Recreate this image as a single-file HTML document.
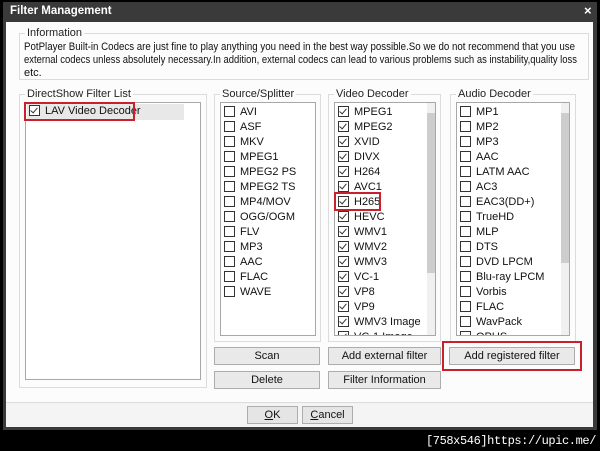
<!DOCTYPE html>
<html><head><meta charset="utf-8"><style>
*{margin:0;padding:0;box-sizing:border-box}
body{width:600px;height:451px;background:#000;position:relative;overflow:hidden;font-family:"Liberation Sans",sans-serif;font-size:11px;color:#111}
.a{position:absolute}
.grp{position:absolute;border:1px solid #dcdcdc}
.lbl{position:absolute;top:-7px;left:5px;background:#fcfcfc;padding:0 2px;font-size:11px;line-height:13px;color:#222}
.box{position:absolute;background:#fff;border:1px solid #a8a8a8}
.it{position:absolute;left:3px;height:15px;line-height:15px;white-space:nowrap}
.cb{display:inline-block;width:11px;height:11px;border:1px solid #333;vertical-align:-2px;margin-right:5px;background:#fff;position:relative}
.cb.c::after{content:"";position:absolute;left:2px;top:0px;width:3px;height:6px;border:solid #333;border-width:0 1px 1px 0;transform:rotate(40deg)}
.sb{position:absolute;top:0;right:0;width:8px;bottom:0;background:#f0f0f0}
.btn{position:absolute;height:18px;border:1px solid #adadad;background:#e9e9e9;text-align:center;line-height:16px;font-size:11px}
.red{position:absolute;border:2px solid #c8202c}
</style></head><body>
<div class="a" style="left:3px;top:2px;width:594px;height:20px;background:#3a3a3a"></div>
<div class="a" style="left:10px;top:5px;color:#fff;font-weight:bold;font-size:11.5px">Filter Management</div>
<div class="a" style="left:584px;top:3px;color:#fff;font-weight:bold;font-size:13px">×</div>
<div class="a" style="left:3px;top:22px;width:3px;height:407px;background:#3a3a3a"></div>
<div class="a" style="left:593px;top:22px;width:4px;height:407px;background:#3a3a3a"></div>
<div class="a" style="left:3px;top:427px;width:594px;height:3px;background:#3a3a3a"></div>
<div class="a" style="left:6px;top:22px;width:587px;height:380px;background:#fcfcfc"></div>
<div class="a" style="left:6px;top:402px;width:587px;height:25px;background:#f4f4f4;border-top:1px solid #dcdcdc"></div>

<div class="grp" style="left:19px;top:33px;width:570px;height:47px">
<div class="lbl">Information</div>
</div>
<svg class="a" style="left:0;top:0" width="600" height="90" font-family="Liberation Sans, sans-serif" font-size="11" fill="#111">
<text x="24" y="50" textLength="551" lengthAdjust="spacingAndGlyphs">PotPlayer Built-in Codecs are just fine to play anything you need in the best way possible.So we do not recommend that you use</text>
<text x="24" y="63" textLength="553" lengthAdjust="spacingAndGlyphs">external codecs unless absolutely necessary.In addition, external codecs can lead to various problems such as instability,quality loss</text>
<text x="24" y="76">etc.</text>
</svg>

<div class="grp" style="left:19px;top:94px;width:188px;height:294px"><div class="lbl">DirectShow Filter List</div></div>
<div class="box" style="left:25px;top:102px;width:176px;height:278px">
<div class="a" style="left:1px;top:1px;width:157px;height:16px;background:#e8e8e8"></div>
<div class="it" style="top:1px"><span class="cb c"></span>LAV Video Decoder</div>
</div>
<div class="red" style="left:24px;top:102px;width:111px;height:19px"></div>

<div class="grp" style="left:214px;top:94px;width:107px;height:248px"><div class="lbl">Source/Splitter</div></div>
<div class="box" style="left:220px;top:102px;width:96px;height:234px">
<div class="it" style="top:2px"><span class="cb"></span>AVI</div>
<div class="it" style="top:17px"><span class="cb"></span>ASF</div>
<div class="it" style="top:32px"><span class="cb"></span>MKV</div>
<div class="it" style="top:47px"><span class="cb"></span>MPEG1</div>
<div class="it" style="top:62px"><span class="cb"></span>MPEG2 PS</div>
<div class="it" style="top:77px"><span class="cb"></span>MPEG2 TS</div>
<div class="it" style="top:92px"><span class="cb"></span>MP4/MOV</div>
<div class="it" style="top:107px"><span class="cb"></span>OGG/OGM</div>
<div class="it" style="top:122px"><span class="cb"></span>FLV</div>
<div class="it" style="top:137px"><span class="cb"></span>MP3</div>
<div class="it" style="top:152px"><span class="cb"></span>AAC</div>
<div class="it" style="top:167px"><span class="cb"></span>FLAC</div>
<div class="it" style="top:182px"><span class="cb"></span>WAVE</div>
</div>

<div class="grp" style="left:328px;top:94px;width:113px;height:248px"><div class="lbl">Video Decoder</div></div>
<div class="box" style="left:334px;top:102px;width:102px;height:234px;overflow:hidden">
<div class="sb"><div class="a" style="left:0;top:10px;width:8px;height:160px;background:#cdcdcd"></div></div>
<div class="it" style="top:2px"><span class="cb c"></span>MPEG1</div>
<div class="it" style="top:17px"><span class="cb c"></span>MPEG2</div>
<div class="it" style="top:32px"><span class="cb c"></span>XVID</div>
<div class="it" style="top:47px"><span class="cb c"></span>DIVX</div>
<div class="it" style="top:62px"><span class="cb c"></span>H264</div>
<div class="it" style="top:77px"><span class="cb c"></span>AVC1</div>
<div class="it" style="top:92px"><span class="cb c"></span>H265</div>
<div class="it" style="top:107px"><span class="cb c"></span>HEVC</div>
<div class="it" style="top:122px"><span class="cb c"></span>WMV1</div>
<div class="it" style="top:137px"><span class="cb c"></span>WMV2</div>
<div class="it" style="top:152px"><span class="cb c"></span>WMV3</div>
<div class="it" style="top:167px"><span class="cb c"></span>VC-1</div>
<div class="it" style="top:182px"><span class="cb c"></span>VP8</div>
<div class="it" style="top:197px"><span class="cb c"></span>VP9</div>
<div class="it" style="top:212px"><span class="cb c"></span>WMV3 Image</div>
<div class="it" style="top:227px"><span class="cb c"></span>VC-1 Image</div>
</div>
<div class="red" style="left:334px;top:192px;width:47px;height:19px"></div>

<div class="grp" style="left:450px;top:94px;width:126px;height:248px"><div class="lbl">Audio Decoder</div></div>
<div class="box" style="left:456px;top:102px;width:114px;height:234px;overflow:hidden">
<div class="sb"><div class="a" style="left:0;top:10px;width:8px;height:150px;background:#cdcdcd"></div></div>
<div class="it" style="top:2px"><span class="cb"></span>MP1</div>
<div class="it" style="top:17px"><span class="cb"></span>MP2</div>
<div class="it" style="top:32px"><span class="cb"></span>MP3</div>
<div class="it" style="top:47px"><span class="cb"></span>AAC</div>
<div class="it" style="top:62px"><span class="cb"></span>LATM AAC</div>
<div class="it" style="top:77px"><span class="cb"></span>AC3</div>
<div class="it" style="top:92px"><span class="cb"></span>EAC3(DD+)</div>
<div class="it" style="top:107px"><span class="cb"></span>TrueHD</div>
<div class="it" style="top:122px"><span class="cb"></span>MLP</div>
<div class="it" style="top:137px"><span class="cb"></span>DTS</div>
<div class="it" style="top:152px"><span class="cb"></span>DVD LPCM</div>
<div class="it" style="top:167px"><span class="cb"></span>Blu-ray LPCM</div>
<div class="it" style="top:182px"><span class="cb"></span>Vorbis</div>
<div class="it" style="top:197px"><span class="cb"></span>FLAC</div>
<div class="it" style="top:212px"><span class="cb"></span>WavPack</div>
<div class="it" style="top:227px"><span class="cb"></span>OPUS</div>
</div>

<div class="btn" style="left:214px;top:347px;width:106px">Scan</div>
<div class="btn" style="left:214px;top:371px;width:106px">Delete</div>
<div class="btn" style="left:328px;top:347px;width:113px">Add external filter</div>
<div class="btn" style="left:328px;top:371px;width:113px">Filter Information</div>
<div class="btn" style="left:449px;top:347px;width:126px">Add registered filter</div>
<div class="red" style="left:442px;top:341px;width:140px;height:30px"></div>

<div class="btn" style="left:247px;top:406px;width:51px;background:#e5e5e5"><u>O</u>K</div>
<div class="btn" style="left:302px;top:406px;width:51px;background:#e5e5e5"><u>C</u>ancel</div>

<div class="a" style="right:4px;top:433px;color:#fff;font-family:'Liberation Mono',monospace;font-size:12px;letter-spacing:-0.4px;line-height:16px">[758x546]https://upic.me/</div>
</body></html>
